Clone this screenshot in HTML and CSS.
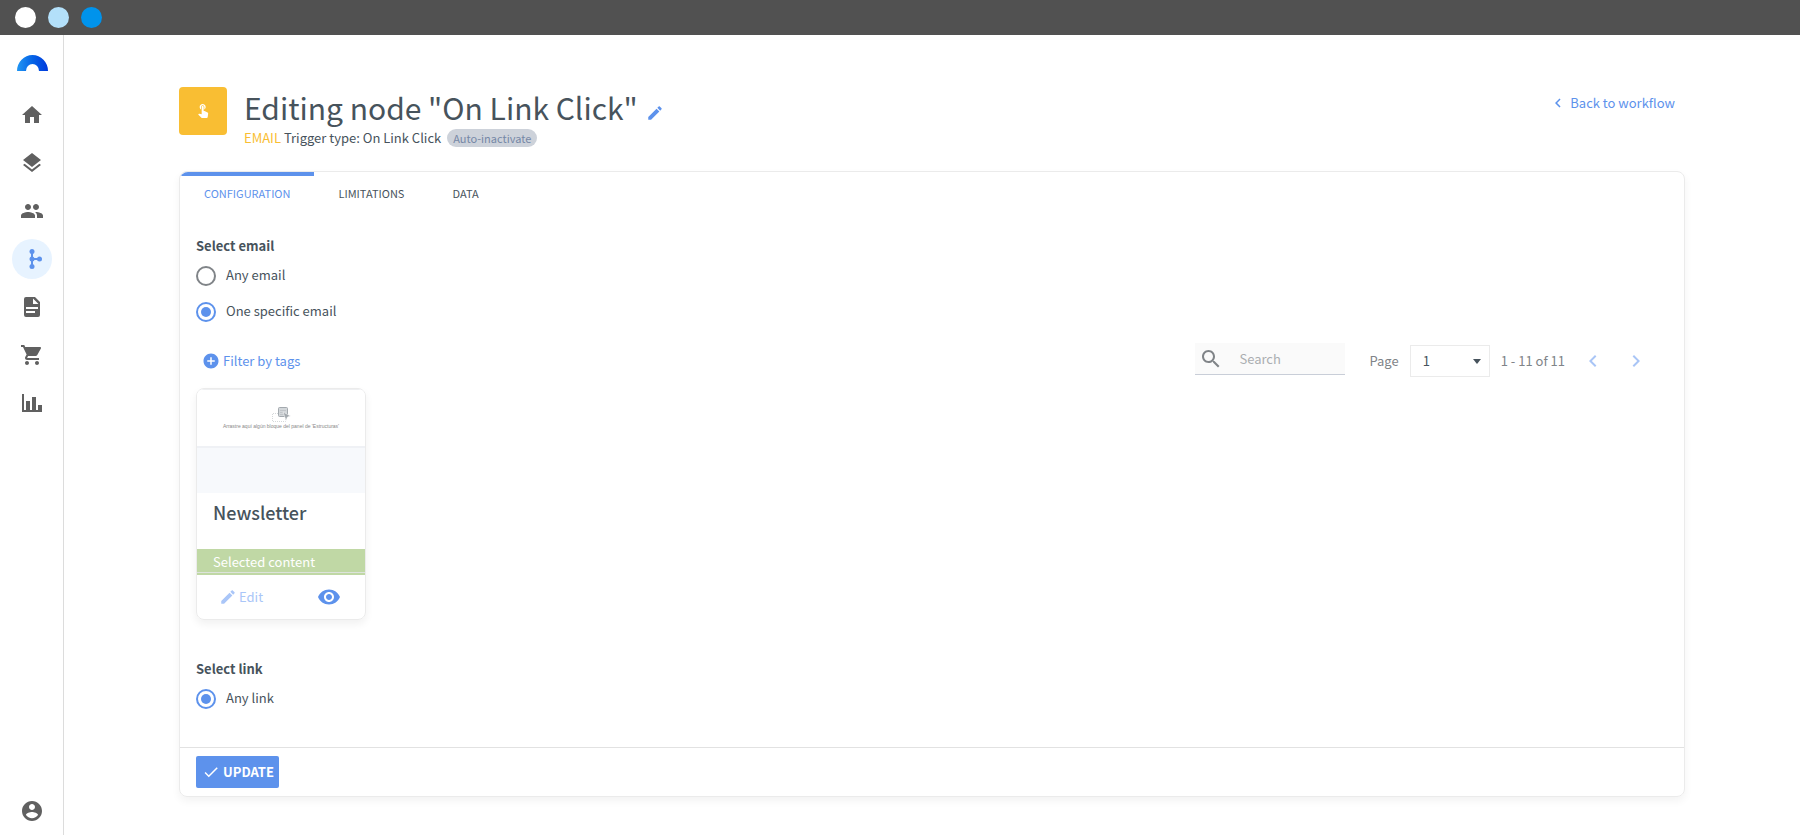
FILE: index.html
```html
<!DOCTYPE html>
<html lang="en">

<head>
    <meta charset="UTF-8">
    <meta name="viewport" content="width=device-width, initial-scale=1.0">
    <title>Editing node "On Link Click"</title>
    <link rel="stylesheet" href="styles.css">
</head>

<body>
    <div class="topbar">
        <span class="dot"></span>
        <span class="dot dot-light"></span>
        <span class="dot dot-blue"></span>
    </div>
    <div class="app">
        <nav class="sidebar" aria-label="Main">
            <a class="logo" href="#" aria-label="Start">
                <svg width="31" height="16" viewBox="0 0 31 16">
                    <defs>
                        <linearGradient id="arc" x1="0" y1="0" x2="1" y2="0">
                            <stop offset="0" stop-color="#2196f3" />
                            <stop offset=".5" stop-color="#0563e6" />
                            <stop offset="1" stop-color="#0039dc" />
                        </linearGradient>
                    </defs>
                    <path fill="url(#arc)" d="M0 16a15.5 16 0 0 1 31 0h-9a6.5 7 0 0 0-13 0z" />
                </svg>
            </a>
            <a class="nav-item" href="#" aria-label="Home">
                <svg viewBox="0 0 24 24"><path d="M10 20v-6h4v6h5v-8h3L12 3 2 12h3v8z" /></svg>
            </a>
            <a class="nav-item" href="#" aria-label="Channels">
                <svg viewBox="0 0 24 24"><path d="M11.99 18.54l-7.37-5.73L3 14.07l9 7 9-7-1.63-1.27-7.38 5.74zM12 16l7.36-5.73L21 9l-9-7-9 7 1.63 1.27L12 16z" /></svg>
            </a>
            <a class="nav-item" href="#" aria-label="Contacts">
                <svg viewBox="0 0 24 24"><path d="M16 11c1.66 0 2.99-1.34 2.99-3S17.66 5 16 5s-3 1.34-3 3 1.34 3 3 3zm-8 0c1.66 0 2.99-1.34 2.99-3S9.66 5 8 5 5 6.34 5 8s1.34 3 3 3zm0 2c-2.33 0-7 1.17-7 3.5V19h14v-2.5c0-2.33-4.67-3.5-7-3.5zm8 0c-.29 0-.62.02-.97.05 1.16.84 1.97 1.97 1.97 3.45V19h6v-2.5c0-2.33-4.67-3.5-7-3.5z" /></svg>
            </a>
            <a class="nav-item active" href="#" aria-label="Workflows">
                <svg viewBox="0 0 24 24">
                    <path d="M11 4h2v7h6v2h-6v7h-2z" />
                    <circle cx="12" cy="4.5" r="2.5" />
                    <circle cx="12" cy="12" r="2.5" />
                    <circle cx="12" cy="19.5" r="2.5" />
                    <circle cx="19.5" cy="12" r="2.5" />
                </svg>
            </a>
            <a class="nav-item" href="#" aria-label="Content">
                <svg viewBox="0 0 24 24"><path fill-rule="evenodd" d="M6 2h9l5 5v13a2 2 0 0 1-2 2H6a2 2 0 0 1-2-2V4a2 2 0 0 1 2-2zM13 3.5V9h5.5zM6 12v2h12v-2zM6 16v2h9v-2z" /></svg>
            </a>
            <a class="nav-item" href="#" aria-label="Store">
                <svg viewBox="0 0 24 24"><path d="M7 18c-1.1 0-1.99.9-1.99 2S5.9 22 7 22s2-.9 2-2-.9-2-2-2zM1 2v2h2l3.6 7.59-1.35 2.45c-.16.28-.25.61-.25.96 0 1.1.9 2 2 2h12v-2H7.42c-.14 0-.25-.11-.25-.25l.03-.12.9-1.63h7.45c.75 0 1.41-.41 1.75-1.03l3.58-6.49c.08-.14.12-.31.12-.48 0-.55-.45-1-1-1H5.21l-.94-2H1zm16 16c-1.1 0-1.99.9-1.99 2s.89 2 1.99 2 2-.9 2-2-.9-2-2-2z" /></svg>
            </a>
            <a class="nav-item" href="#" aria-label="Reports">
                <svg viewBox="0 0 24 24"><path d="M2 3h2v16h2v-9h4v9h2V6h4v13h2v-5h4v7H2z" /></svg>
            </a>
            <a class="nav-item account" href="#" aria-label="Account">
                <svg viewBox="0 0 24 24"><path d="M12 2C6.48 2 2 6.48 2 12s4.48 10 10 10 10-4.48 10-10S17.52 2 12 2zm0 3c1.66 0 3 1.34 3 3s-1.34 3-3 3-3-1.34-3-3 1.34-3 3-3zm0 14.2c-2.5 0-4.71-1.28-6-3.22.03-1.99 4-3.08 6-3.08 1.99 0 5.97 1.09 6 3.08-1.29 1.94-3.5 3.22-6 3.22z" /></svg>
            </a>
        </nav>

        <main class="content">
            <header class="page-header">
                <div class="node-icon">
                    <svg width="16" height="16" viewBox="0 0 24 24"><path d="M9 11.24V7.5a2.5 2.5 0 0 1 5 0v3.74c1.21-.81 2-2.18 2-3.74C16 5.01 13.99 3 11.5 3S7 5.01 7 7.5c0 1.56.79 2.93 2 3.74zm9.84 4.63l-4.54-2.26c-.17-.07-.35-.11-.54-.11H13v-6c0-.83-.67-1.5-1.5-1.5S10 6.67 10 7.5v10.74l-3.43-.72c-.08-.01-.15-.03-.24-.03-.31 0-.59.13-.79.33l-.79.8 4.94 4.94c.27.27.65.44 1.06.44h6.79c.75 0 1.33-.55 1.44-1.28l.75-5.27c.01-.07.02-.14.02-.2 0-.62-.38-1.16-.91-1.38z" /></svg>
                </div>
                <div class="heading">
                    <div class="title-row">
                        <h1>Editing node "On Link Click"</h1>
                        <button type="button" class="icon-button" aria-label="Rename">
                            <svg width="18" height="18" viewBox="0 0 24 24"><path d="M3 17.25V21h3.75L17.81 9.94l-3.75-3.75L3 17.25zM20.71 7.04c.39-.39.39-1.02 0-1.41l-2.34-2.34c-.39-.39-1.02-.39-1.41 0l-1.83 1.83 3.75 3.75 1.83-1.83z" /></svg>
                        </button>
                    </div>
                    <p class="subtitle"><span><span class="kind">EMAIL</span> Trigger type: On Link Click</span><span class="badge">Auto-inactivate</span></p>
                </div>
                <a class="back" href="#">
                    <svg width="18" height="18" viewBox="0 0 24 24"><path d="M15.41 7.41L14 6l-6 6 6 6 1.41-1.41L10.83 12z" /></svg>
                    Back to workflow
                </a>
            </header>

            <section class="panel">
                <div class="tabs" role="tablist">
                    <button type="button" class="tab selected" role="tab" aria-selected="true">CONFIGURATION</button>
                    <button type="button" class="tab" role="tab" aria-selected="false">LIMITATIONS</button>
                    <button type="button" class="tab" role="tab" aria-selected="false">DATA</button>
                </div>

                <form class="config">
                    <fieldset class="group">
                        <legend>Select email</legend>
                        <label class="option"><input type="radio" name="email"><span>Any email</span></label>
                        <label class="option"><input type="radio" name="email" checked><span>One specific email</span></label>
                    </fieldset>

                    <div class="toolbar">
                        <button type="button" class="filter">
                            <svg width="18" height="18" viewBox="0 0 24 24"><path d="M12 2C6.48 2 2 6.48 2 12s4.48 10 10 10 10-4.48 10-10S17.52 2 12 2zm5 11h-4v4h-2v-4H7v-2h4V7h2v4h4v2z" /></svg>
                            Filter by tags
                        </button>
                        <div class="paging">
                            <label class="search">
                                <svg width="24" height="24" viewBox="0 0 24 24"><path d="M15.5 14h-.79l-.28-.27C15.41 12.59 16 11.11 16 9.5 16 5.91 13.09 3 9.5 3S3 5.91 3 9.5 5.91 16 9.5 16c1.61 0 3.09-.59 4.23-1.57l.27.28v.79l5 4.99L20.49 19l-4.99-5zm-6 0C7.01 14 5 11.99 5 9.5S7.01 5 9.5 5 14 7.01 14 9.5 11.99 14 9.5 14z" /></svg>
                                <input type="text" placeholder="Search" aria-label="Search">
                            </label>
                            <label for="page">Page</label>
                            <div class="select">
                                <select id="page">
                                    <option>1</option>
                                </select>
                                <svg class="caret" width="8" height="5" viewBox="0 0 8 5"><path d="M0 0h8L4 5z" /></svg>
                            </div>
                            <span class="range">1 - 11 of 11</span>
                            <button type="button" class="pager" aria-label="Previous page">
                                <svg width="24" height="24" viewBox="0 0 24 24"><path d="M15.41 7.41L14 6l-6 6 6 6 1.41-1.41L10.83 12z" /></svg>
                            </button>
                            <button type="button" class="pager" aria-label="Next page">
                                <svg width="24" height="24" viewBox="0 0 24 24"><path d="M10 6L8.59 7.41 13.17 12l-4.58 4.59L10 18l6-6z" /></svg>
                            </button>
                        </div>
                    </div>

                    <article class="card">
                        <div class="preview">
                            <div class="preview-block">
                                <svg width="20" height="17" viewBox="0 0 20 17">
                                    <path d="M7 7.5H1.5v8h13V12" fill="none" stroke="#d5d8da" stroke-dasharray="1 1" />
                                    <rect x="7.5" y="1.5" width="9" height="9" rx="1" fill="#d3d7da" stroke="#a3a9ae" />
                                    <path d="M9 4.5h6M9 6.5h5M9 8.5h4" stroke="#c1c5c9" />
                                    <path d="M12 6l7.5 4-3 1-1.5 3.5z" fill="#a3a9ae" stroke="#fff" stroke-width=".5" />
                                </svg>
                                <p>Arrastre aquí algún bloque del panel de 'Estructuras'</p>
                            </div>
                        </div>
                        <h2>Newsletter</h2>
                        <p class="status">Selected content</p>
                        <div class="card-actions">
                            <button type="button" class="edit" disabled>
                                <svg width="18" height="18" viewBox="0 0 24 24"><path d="M3 17.25V21h3.75L17.81 9.94l-3.75-3.75L3 17.25zM20.71 7.04c.39-.39.39-1.02 0-1.41l-2.34-2.34c-.39-.39-1.02-.39-1.41 0l-1.83 1.83 3.75 3.75 1.83-1.83z" /></svg>
                                Edit
                            </button>
                            <button type="button" class="icon-button" aria-label="Preview">
                                <svg width="24" height="24" viewBox="0 0 24 24"><path d="M12 4.5C7 4.5 2.73 7.61 1 12c1.73 4.39 6 7.5 11 7.5s9.27-3.11 11-7.5c-1.73-4.39-6-7.5-11-7.5zM12 17c-2.76 0-5-2.24-5-5s2.24-5 5-5 5 2.24 5 5-2.24 5-5 5zm0-8c-1.66 0-3 1.34-3 3s1.34 3 3 3 3-1.34 3-3-1.34-3-3-3z" /></svg>
                            </button>
                        </div>
                    </article>

                    <fieldset class="group">
                        <legend>Select link</legend>
                        <label class="option"><input type="radio" name="link" checked><span>Any link</span></label>
                    </fieldset>
                </form>

                <footer class="panel-footer">
                    <button type="button" class="update">
                        <svg width="18" height="18" viewBox="0 0 24 24"><path d="M9 16.17L4.83 12l-1.42 1.41L9 19 21 7l-1.41-1.41z" /></svg>
                        UPDATE
                    </button>
                </footer>
            </section>
        </main>
    </div>
</body>

</html>
```
FILE: styles.css
```css
* {
    box-sizing: border-box;
}

body {
    margin: 0;
    min-height: 100vh;
    display: flex;
    flex-direction: column;
    font-family: "Noto Sans CJK SC", "Open Sans", sans-serif;
    font-size: 13px;
    line-height: 20px;
    color: #47535c;
    background: #fff;
}

h1, h2, p, fieldset {
    margin: 0;
    padding: 0;
    border: 0;
}

button, input, select {
    font: inherit;
    color: inherit;
}

button {
    padding: 0;
    border: 0;
    background: none;
    cursor: pointer;
}

a {
    color: #5d92ec;
    text-decoration: none;
}

svg {
    display: block;
    flex: none;
    fill: currentColor;
}

/* window bar */
.topbar {
    display: flex;
    align-items: center;
    gap: 12px;
    height: 35px;
    padding: 0 15px;
    background: #515151;
}

.dot {
    width: 21px;
    height: 21px;
    border-radius: 50%;
    background: #fff;
}

.dot-light {
    background: #b3e0fa;
}

.dot-blue {
    background: #0093ec;
}

.app {
    flex: 1;
    display: flex;
}

/* sidebar */
.sidebar {
    display: flex;
    flex-direction: column;
    align-items: center;
    gap: 8px;
    width: 64px;
    padding: 20px 0 4px 1px;
    border-right: 1px solid #dcdcdc;
}

.logo {
    margin-bottom: 16px;
}

.nav-item {
    display: grid;
    place-items: center;
    width: 40px;
    height: 40px;
    border-radius: 50%;
    color: #606060;
}

.nav-item svg {
    width: 24px;
    height: 24px;
}

.nav-item.active {
    color: #5d92ec;
    background: #e7f3ff;
}

.account {
    margin-top: auto;
}

/* page */
.content {
    flex: 1;
    padding: 52px 115px 36px;
}

.page-header {
    display: flex;
    align-items: flex-start;
    gap: 17px;
    height: 84px;
}

.node-icon {
    display: grid;
    place-items: center;
    width: 48px;
    height: 48px;
    padding-bottom: 2px;
    border-radius: 4px;
    color: #fff;
    background: #f9be33;
}

.heading {
    flex: 1;
}

.title-row {
    display: flex;
    align-items: flex-end;
    gap: 8px;
}

.title-row .icon-button {
    padding-bottom: 6px;
}

h1 {
    font-size: 30px;
    font-weight: 400;
    line-height: 41px;
}

.icon-button {
    color: #5d92ec;
}

.subtitle {
    display: flex;
    align-items: center;
    gap: 6px;
}

.kind {
    color: #f9be33;
}

.badge {
    padding: 0 6px;
    border-radius: 9px;
    font-size: 11px;
    line-height: 18px;
    color: #7587a6;
    background: #cdd2da;
}

.back {
    display: flex;
    align-items: center;
    gap: 3px;
    margin: 6px 10px 0 0;
}

.panel {
    border: 1px solid #ebebeb;
    border-radius: 8px;
    box-shadow: 0 4px 8px rgba(0, 0, 0, .05);
}

.tabs {
    display: flex;
    overflow: hidden;
    border-radius: 8px 8px 0 0;
}

.tab {
    height: 38px;
    padding: 0 24px;
    border-top: 4px solid transparent;
    font-size: 11px;
}

.tab.selected {
    color: #5d92ec;
    border-top-color: #5d92ec;
    border-radius: 0 0 4px 0;
}

.config {
    padding: 26px 16px 22px;
}

.group legend {
    padding: 0;
    font-weight: 700;
    line-height: 20px;
}

.option {
    display: flex;
    align-items: flex-start;
    gap: 10px;
    width: max-content;
    margin-bottom: 16px;
    line-height: 18px;
}

.option input {
    appearance: none;
    display: grid;
    place-items: center;
    width: 20px;
    height: 20px;
    margin: 0;
    border: 2px solid #808488;
    border-radius: 50%;
}

.option input:checked {
    border-color: #5d92ec;
}

.option input:checked::before {
    content: "";
    width: 10px;
    height: 10px;
    border-radius: 50%;
    background: #5d92ec;
}

legend + .option {
    margin-top: 10px;
}

/* list toolbar */
.toolbar {
    display: flex;
    justify-content: space-between;
    align-items: center;
    height: 34px;
    margin-top: 6px;
    padding: 0 20px 0 6px;
}

.filter {
    display: flex;
    align-items: center;
    gap: 3px;
    color: #5d92ec;
}

.paging {
    display: flex;
    align-items: center;
    color: #808488;
}

.search {
    display: flex;
    align-items: center;
    gap: 16px;
    width: 150px;
    height: 32px;
    margin: 0 24px 4px 0;
    padding: 0 4px;
    border-bottom: 1px solid #c9ced8;
    background: #fafafa;
}

.search input {
    width: 100%;
    min-width: 0;
    padding: 0;
    border: 0;
    outline: 0;
    background: none;
}

.search input::placeholder {
    color: #abaeb1;
}

.select {
    position: relative;
    width: 80px;
    margin: 0 11px;
    color: #47535c;
}

.select select {
    display: block;
    appearance: none;
    width: 100%;
    height: 32px;
    padding: 0 12px;
    border: 1px solid #ebebeb;
    border-radius: 0;
    background: #fff;
}

.caret {
    position: absolute;
    top: 14px;
    right: 9px;
    pointer-events: none;
}

.range {
    margin-right: 16px;
}

.pager {
    margin-right: 19px;
    color: #a9c5f6;
}

.pager:last-child {
    margin-right: 0;
}

/* email card */
.card {
    width: 170px;
    margin: 10px 0 39px;
    overflow: hidden;
    border: 1px solid #ebebeb;
    border-radius: 8px;
    box-shadow: 0 4px 8px rgba(0, 0, 0, .06);
}

.preview {
    height: 104px;
    background: #f7f9fc;
}

.preview-block {
    display: flex;
    flex-direction: column;
    align-items: center;
    height: 59px;
    padding-top: 16px;
    border-top: 1px solid #eff0f2;
    border-bottom: 2px solid #eff1f5;
    background: #fff;
}

.preview-block p {
    font-family: "Liberation Sans", Arial, sans-serif;
    font-size: 5px;
    line-height: 6px;
    color: #888;
}

.card h2 {
    padding: 8px 16px 26px;
    font-size: 18px;
    font-weight: 500;
    line-height: 22px;
}

.status {
    padding: 3px 16px 0;
    border-bottom: 1px solid #dde3dc;
    line-height: 20px;
    color: #fff;
    background: #c0d8a5;
}

.card-actions {
    display: flex;
    justify-content: space-between;
    align-items: center;
    height: 46px;
    padding: 0 24px 1px 22px;
    border-top: 2px solid #c0d8a5;
}

.edit {
    display: flex;
    align-items: center;
    gap: 2px;
    color: #aac6f8;
}

.panel-footer {
    padding: 8px 16px;
    border-top: 1px solid #e2e2e2;
}

.update {
    display: flex;
    align-items: center;
    gap: 3px;
    height: 32px;
    padding: 0 5px 0 6px;
    border-radius: 2px;
    font-weight: 700;
    color: #fff;
    background: #5d92ec;
}
```
